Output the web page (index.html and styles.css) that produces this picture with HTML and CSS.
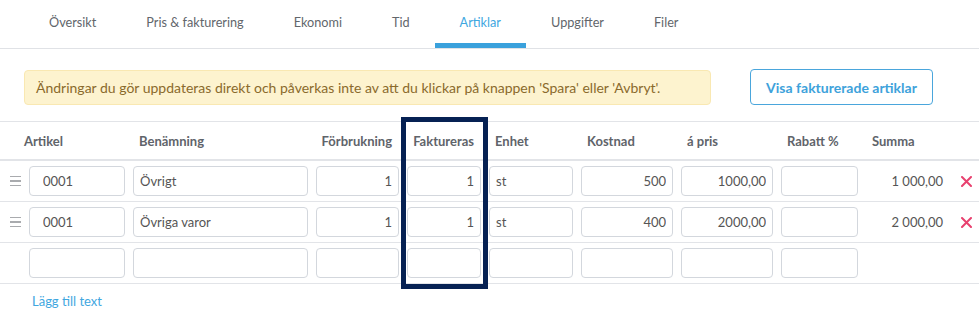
FILE: index.html
```html
<!DOCTYPE html>
<html lang="sv">
<head>
<meta charset="utf-8">
<title>Artiklar</title>
<link rel="stylesheet" href="styles.css">
</head>
<body>
<nav class="tabs">
  <a class="tab">Översikt</a>
  <a class="tab">Pris &amp; fakturering</a>
  <a class="tab">Ekonomi</a>
  <a class="tab">Tid</a>
  <a class="tab active">Artiklar</a>
  <a class="tab">Uppgifter</a>
  <a class="tab">Filer</a>
</nav>

<div class="toolbar">
  <div class="alert">Ändringar du gör uppdateras direkt och påverkas inte av att du klickar på knappen 'Spara' eller 'Avbryt'.</div>
  <button class="btn-outline">Visa fakturerade artiklar</button>
</div>

<div class="table">
  <div class="row head">
    <div class="th th-first">Artikel</div>
    <div class="th">Benämning</div>
    <div class="th right">Förbrukning</div>
    <div class="th right">Faktureras</div>
    <div class="th">Enhet</div>
    <div class="th">Kostnad</div>
    <div class="th">á pris</div>
    <div class="th">Rabatt %</div>
    <div class="th">Summa</div>
    <div class="th"></div>
  </div>

  <div class="row">
    <div class="handle"><span></span><span></span><span></span></div>
    <input class="inp code" value="0001">
    <input class="inp" value="Övrigt">
    <input class="inp num" value="1">
    <input class="inp num" value="1">
    <input class="inp" value="st">
    <input class="inp num" value="500">
    <input class="inp num" value="1000,00">
    <input class="inp num" value="">
    <div class="sum">1 000,00</div>
    <div class="del"><svg width="11" height="11" viewBox="0 0 11 11"><path d="M1 1L10 10M10 1L1 10" stroke="#e8416f" stroke-width="2" stroke-linecap="round"/></svg></div>
  </div>

  <div class="row">
    <div class="handle"><span></span><span></span><span></span></div>
    <input class="inp code" value="0001">
    <input class="inp" value="Övriga varor">
    <input class="inp num" value="1">
    <input class="inp num" value="1">
    <input class="inp" value="st">
    <input class="inp num" value="400">
    <input class="inp num" value="2000,00">
    <input class="inp num" value="">
    <div class="sum">2 000,00</div>
    <div class="del"><svg width="11" height="11" viewBox="0 0 11 11"><path d="M1 1L10 10M10 1L1 10" stroke="#e8416f" stroke-width="2" stroke-linecap="round"/></svg></div>
  </div>

  <div class="row">
    <div class="handle-empty"></div>
    <input class="inp code" value="">
    <input class="inp" value="">
    <input class="inp num" value="">
    <input class="inp num" value="">
    <input class="inp" value="">
    <input class="inp num" value="">
    <input class="inp num" value="">
    <input class="inp num" value="">
    <div class="sum"></div>
    <div class="del"></div>
  </div>

  <div class="highlight"></div>
</div>

<a class="add-link">Lägg till text</a>
</body>
</html>
```

FILE: styles.css
```css
* { box-sizing: border-box; }

body {
  margin: 0;
  font-family: Lato, "Liberation Sans", sans-serif;
  font-size: 14px;
  color: #555;
  background: #fff;
}

.tabs {
  display: flex;
  padding-left: 24px;
  height: 49px;
  border-bottom: 1px solid #e0e2e6;
  font-size: 12.7px;
}

.tab {
  display: block;
  padding: 0 25px;
  height: 48px;
  line-height: 44px;
  color: #62666b;
  border-bottom: 5px solid transparent;
  white-space: nowrap;
}

.tab.active {
  color: #3fa7df;
  border-bottom-color: #3aa1dc;
}

.toolbar {
  display: flex;
  align-items: center;
  gap: 39px;
  padding: 20px 46px 0 24px;
}

.alert {
  flex: 1;
  height: 35px;
  line-height: 33px;
  padding: 0 11px;
  background: #fdf3cf;
  border: 1px solid #f9e8b2;
  border-radius: 4px;
  color: #8a6a2c;
  white-space: nowrap;
}

.btn-outline {
  width: 183px;
  height: 36px;
  font: inherit;
  font-weight: 700;
  color: #3ea2db;
  background: #fff;
  border: 1px solid #4aa6dc;
  border-radius: 4px;
  padding: 0;
}

.table {
  position: relative;
  margin-top: 16px;
  font-size: 13px;
}

.row {
  display: grid;
  grid-template-columns: 21px 96px 175px 83px 74px 84px 92px 92px 77px 83px 22px;
  column-gap: 8px;
  align-items: center;
  padding: 5px 0;
  border-bottom: 1px solid #e2e4e8;
}

.row.head {
  padding: 0;
  height: 40px;
  border-top: 1px solid #e2e4e8;
  border-bottom: 2px solid #e2e4e8;
}

.th {
  font-weight: 700;
  color: #5f646a;
  padding-left: 6px;
  white-space: nowrap;
}

.th-first {
  grid-column: span 2;
  padding-left: 24px;
}

.th.right {
  text-align: right;
  padding-left: 0;
  padding-right: 7px;
}

.handle {
  display: flex;
  flex-direction: column;
  gap: 3px;
  padding-left: 10px;
}

.handle span {
  display: block;
  width: 11px;
  height: 1.5px;
  background: #a9abae;
}

.inp {
  width: 100%;
  height: 30px;
  font: inherit;
  color: #555;
  border: 1px solid #d3d7dd;
  border-radius: 4px;
  padding: 0 6px;
  background: #fff;
}

.inp.code { padding-left: 13px; }
.inp.num { text-align: right; }

.sum {
  text-align: right;
  padding-right: 6px;
  color: #555;
}

.del {
  display: flex;
  justify-content: center;
  padding-right: 4px;
}

.highlight {
  position: absolute;
  left: 401px;
  top: -4px;
  width: 87px;
  height: 172px;
  border: 5px solid #062153;
  pointer-events: none;
}

.add-link {
  display: inline-block;
  margin: 9px 0 0 32px;
  font-size: 13px;
  color: #3fa7df;
}
```
